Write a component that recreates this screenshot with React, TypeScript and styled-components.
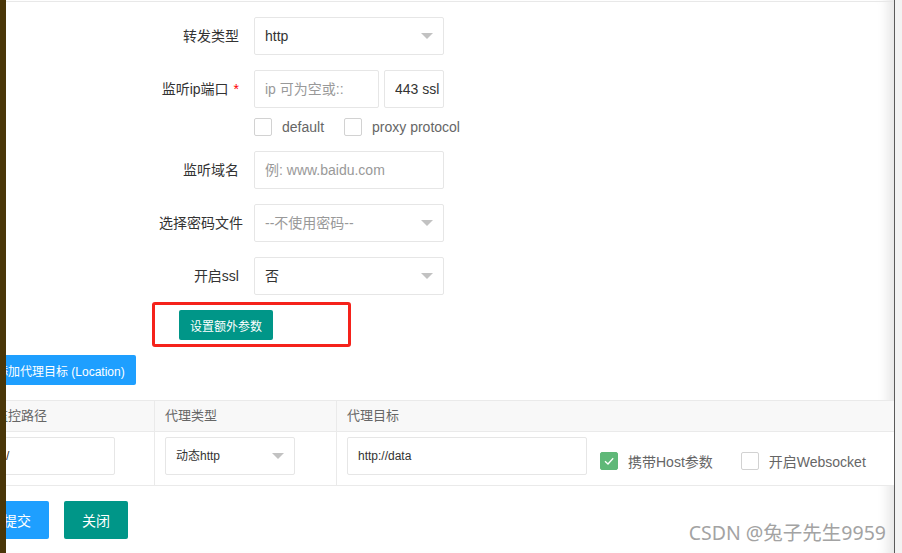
import styled, { createGlobalStyle, css } from 'styled-components';

const GlobalStyle = createGlobalStyle`
    html, body {
        margin: 0;
        padding: 0;
        background: #f3f3f3;
    }

    body {
        font-family: "Liberation Sans", "Noto Sans CJK SC", sans-serif;
        color: #333;
    }

    * {
        box-sizing: border-box;
    }
`

interface SpacingProps {
    $mb: number;
}

interface WidthProps {
    $w: number;
}

interface SelectProps extends WidthProps {
    $muted?: boolean;
    $small?: boolean;
}

interface BoxProps {
    $checked?: boolean;
}

interface ButtonProps {
    $tone: 'blue' | 'green';
    $sm?: boolean;
}

const Screen = styled.div`
    display: flex;
    width: 902px;
    height: 553px;
    overflow: hidden;
`

const BackdropStrip = styled.div`
    width: 6px;
    flex-shrink: 0;
    background: #4a3608;
`

const Panel = styled.div`
    position: relative;
    width: 889px;
    flex-shrink: 0;
    padding-top: 1px;
    background: #fff;
    border-right: 1px solid #5a5a5a;
    overflow: hidden;
    box-shadow: inset -14px 0 12px -8px rgba(0, 0, 0, 0.1);
`

const Gutter = styled.div`
    flex: 1;
    background: #f3f3f3;
`

const TopRule = styled.div`
    height: 1px;
    background: #e8e8e8;
`

const Form = styled.div`
    display: flex;
    flex-direction: column;
    padding: 15px 0 0 138px;
`

const FormItem = styled.div<SpacingProps>`
    display: flex;
    align-items: center;
    margin-bottom: ${({$mb}) => $mb}px;
`

const Label = styled.label`
    width: 110px;
    padding: 0 15px;
    text-align: right;
    line-height: 38px;
    font-size: 14px;
    color: #333;
    white-space: nowrap;
`

const Required = styled.span`
    color: #f00;
    margin-left: 5px;
`

const InputBlock = styled.div`
    display: flex;
    gap: 5px;
`

const TextInput = styled.input<WidthProps & { $small?: boolean; $tight?: boolean }>`
    width: ${({$w}) => $w}px;
    height: 38px;
    padding: 0 ${({$tight}) => $tight ? 0 : 10}px 0 10px;
    border: 1px solid #e6e6e6;
    border-radius: 2px;
    background: #fff;
    outline: none;
    font-family: inherit;
    font-size: ${({$small}) => $small ? 12 : 14}px;
    color: #333;

    &::placeholder {
        color: #999;
    }
`

const Select = styled.div<SelectProps>`
    position: relative;
    width: ${({$w}) => $w}px;
    height: 38px;
    padding-left: 10px;
    border: 1px solid #e6e6e6;
    border-radius: 2px;
    background: #fff;
    line-height: 36px;
    font-size: ${({$small}) => $small ? 12 : 14}px;
    color: ${({$muted}) => $muted ? '#999' : '#333'};

    &:after {
        content: "";
        position: absolute;
        right: 10px;
        top: 50%;
        margin-top: -3px;
        border-style: solid;
        border-width: 6px 6px 0;
        border-color: #c2c2c2 transparent transparent;
    }
`

const CheckRow = styled.div<SpacingProps>`
    display: flex;
    align-items: center;
    gap: 20px;
    height: 18px;
    margin-left: 110px;
    margin-bottom: ${({$mb}) => $mb}px;
`

const CheckItem = styled.label`
    display: flex;
    align-items: center;
    gap: 10px;
    font-size: 14px;
    color: #666;
    white-space: nowrap;
`

const Box = styled.span<BoxProps>`
    display: flex;
    align-items: center;
    justify-content: center;
    width: 18px;
    height: 18px;
    border: 1px solid #d2d2d2;
    border-radius: 2px;
    background: #fff;

    ${({$checked}) => $checked && css`
        border-color: #5fb878;
        background: #5fb878;
    `}
`

const Callout = styled.div`
    width: 199px;
    height: 45px;
    margin-left: 8px;
    padding: 5px 0 0 24px;
    border: 3px solid #f5221b;
    border-radius: 3px;
`

const Button = styled.button<ButtonProps>`
    display: inline-flex;
    align-items: center;
    height: ${({$sm}) => $sm ? 30 : 38}px;
    padding: 0 ${({$sm}) => $sm ? 11 : 18}px;
    border: none;
    border-radius: 2px;
    background: ${({$tone}) => $tone === 'blue' ? '#1e9fff' : '#009688'};
    color: #fff;
    font-family: inherit;
    font-size: ${({$sm}) => $sm ? 12 : 14}px;
    white-space: nowrap;
    cursor: pointer;
`

const Lower = styled.div`
    display: flex;
    flex-direction: column;
    align-items: flex-start;
    margin: 8px 0 0 -21px;
`

const Table = styled.div`
    align-self: stretch;
    margin-top: 15px;
    border-top: 1px solid #eaeaea;
`

const TableRow = styled.div<{ $head?: boolean }>`
    display: grid;
    grid-template-columns: 170px 182px 1fr;
    border-bottom: 1px solid #eaeaea;
    background: ${({$head}) => $head ? '#f8f8f8' : '#fff'};
`

const HeadCell = styled.div`
    height: 30px;
    padding: 0 10px;
    line-height: 30px;
    font-size: 13px;
    color: #666;
    border-right: 1px solid #eaeaea;

    &:last-child {
        border-right: none;
    }
`

const BodyCell = styled.div`
    display: flex;
    align-items: center;
    padding: 5px 10px 10px;
    border-right: 1px solid #eaeaea;

    &:last-child {
        border-right: none;
    }
`

const CellChecks = styled.div`
    display: flex;
    align-items: center;
    gap: 28px;
    margin: 10px 0 0 13px;
`

const Actions = styled.div`
    display: flex;
    gap: 15px;
    margin-top: 15px;
`

const Watermark = styled.div`
    position: absolute;
    right: 8px;
    top: 523px;
    font-family: "Noto Sans", "Noto Sans CJK SC", sans-serif;
    font-size: 19.5px;
    line-height: 1;
    color: #a3a3a3;
    text-shadow: 0 0 1px #fff;
    white-space: nowrap;
`

const CheckMark = () => (
    <svg width="12" height="12" viewBox="0 0 12 12">
        <polyline points="2,6.2 5,9 10.2,3.2" fill="none" stroke="#fff" strokeWidth="1.3" />
    </svg>
);

const App = () => {
    return (
        <>
            <GlobalStyle />
            <Screen>
                <BackdropStrip />
                <Panel>
                    <TopRule />
                    <Form>
                        <FormItem $mb={15}>
                            <Label>转发类型</Label>
                            <Select $w={190}>http</Select>
                        </FormItem>
                        <FormItem $mb={10}>
                            <Label>监听ip端口<Required>*</Required></Label>
                            <InputBlock>
                                <TextInput $w={125} placeholder="ip 可为空或::" readOnly />
                                <TextInput $w={60} $tight defaultValue="443 ssl" readOnly />
                            </InputBlock>
                        </FormItem>
                        <CheckRow $mb={15}>
                            <CheckItem><Box />default</CheckItem>
                            <CheckItem><Box />proxy protocol</CheckItem>
                        </CheckRow>
                        <FormItem $mb={15}>
                            <Label>监听域名</Label>
                            <TextInput $w={190} placeholder="例: www.baidu.com" readOnly />
                        </FormItem>
                        <FormItem $mb={15}>
                            <Label>选择密码文件</Label>
                            <Select $w={190} $muted>--不使用密码--</Select>
                        </FormItem>
                        <FormItem $mb={7}>
                            <Label>开启ssl</Label>
                            <Select $w={190}>否</Select>
                        </FormItem>
                        <Callout>
                            <Button $tone="green" $sm>设置额外参数</Button>
                        </Callout>
                    </Form>
                    <Lower>
                        <Button $tone="blue" $sm>添加代理目标 (Location)</Button>
                        <Table>
                            <TableRow $head>
                                <HeadCell>监控路径</HeadCell>
                                <HeadCell>代理类型</HeadCell>
                                <HeadCell>代理目标</HeadCell>
                            </TableRow>
                            <TableRow>
                                <BodyCell>
                                    <TextInput $w={120} $small defaultValue="/" readOnly />
                                </BodyCell>
                                <BodyCell>
                                    <Select $w={130} $small>动态http</Select>
                                </BodyCell>
                                <BodyCell>
                                    <TextInput $w={240} $small defaultValue="http://data" readOnly />
                                    <CellChecks>
                                        <CheckItem><Box $checked><CheckMark /></Box>携带Host参数</CheckItem>
                                        <CheckItem><Box />开启Websocket</CheckItem>
                                    </CellChecks>
                                </BodyCell>
                            </TableRow>
                        </Table>
                        <Actions>
                            <Button $tone="blue">提交</Button>
                            <Button $tone="green">关闭</Button>
                        </Actions>
                    </Lower>
                    <Watermark>CSDN @兔子先生9959</Watermark>
                </Panel>
                <Gutter />
            </Screen>
        </>
    );
};

export default App;
